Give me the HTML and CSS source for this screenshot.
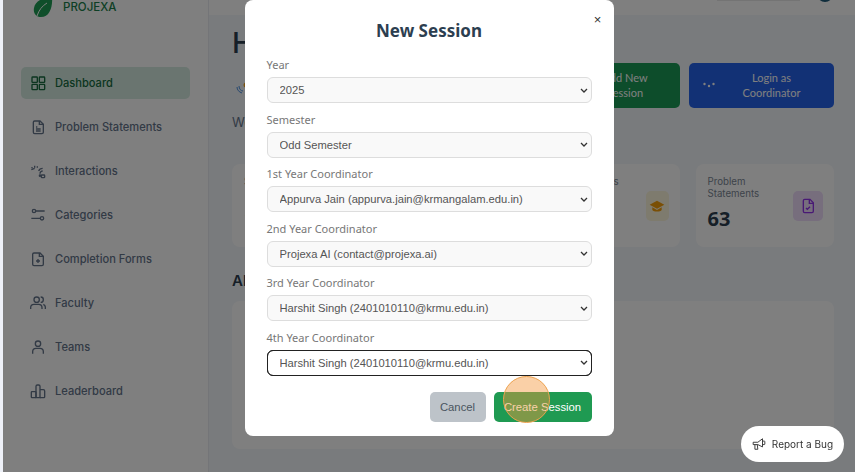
FILE: index.html
```html
<!DOCTYPE html>
<html lang="en">
<head>
  <meta charset="UTF-8">
  <meta name="viewport" content="width=device-width,initial-scale=1.0">
  <title>Projexa Dashboard</title>
  <link rel="stylesheet" href="styles.css">
</head>
<body>
  <div class="layout">
    <aside class="sidebar">
      <div class="brand">
        <svg class="brand-leaf" viewBox="0 0 20 24"><path d="M19 0C20 12 17 22 8 22C3 22 0 18 1 13C2 6 10 3 19 0Z" fill="#1f9d55"/><path d="M4 21C6 15 9 11 14 8" fill="none" stroke="#fff" stroke-width="1"/></svg>
        <span>PROJEXA</span>
      </div>
      <nav class="nav">
        <a class="nav-item active">
          <svg viewBox="0 0 24 24"><rect x="3" y="3" width="8" height="8" rx="1"/><rect x="14" y="3" width="8" height="8" rx="1"/><rect x="3" y="14" width="8" height="8" rx="1"/><rect x="14" y="14" width="8" height="8" rx="1"/></svg>
          Dashboard
        </a>
        <a class="nav-item">
          <svg viewBox="0 0 24 24"><path d="M5 5a2 2 0 0 1 2-2h8l5 5v12a2 2 0 0 1-2 2H7a2 2 0 0 1-2-2Z"/><path d="M14 3v5h6M9 12h2M9 15h7M9 18h7"/></svg>
          Problem Statements
        </a>
        <a class="nav-item">
          <svg viewBox="0 0 24 24"><path d="M2 10l5-2M3 6v2M7 4v3M11 5v2M13 12c1-3 3-4 6-4M15 16c0-2 2-4 4-4"/><rect x="17" y="18" width="5" height="4" rx="1"/><circle cx="15" cy="19" r="1"/></svg>
          Interactions
        </a>
        <a class="nav-item">
          <svg viewBox="0 0 24 24"><circle cx="6" cy="6" r="2.5"/><path d="M9 6h13M2 17h13"/><circle cx="18" cy="17" r="2.5"/></svg>
          Categories
        </a>
        <a class="nav-item">
          <svg viewBox="0 0 24 24"><path d="M4 5a2 2 0 0 1 2-2h9l5 5v12a2 2 0 0 1-2 2H6a2 2 0 0 1-2-2Z"/><path d="M14 3v5h6M12 12v6M9 15h6"/></svg>
          Completion Forms
        </a>
        <a class="nav-item">
          <svg viewBox="0 0 24 24"><circle cx="10" cy="7" r="4"/><path d="M1 21v-2a5 5 0 0 1 5-5h7a5 5 0 0 1 5 5v2M16 3a4 4 0 0 1 0 8M20 14a5 5 0 0 1 3 5v2"/></svg>
          Faculty
        </a>
        <a class="nav-item">
          <svg viewBox="0 0 24 24"><circle cx="12" cy="7" r="4"/><path d="M4 22v-3a5 5 0 0 1 5-5h6a5 5 0 0 1 5 5v3"/></svg>
          Teams
        </a>
        <a class="nav-item">
          <svg viewBox="0 0 24 24"><rect x="2" y="13" width="7" height="9" rx="1"/><path d="M9 22V5a2 2 0 0 1 2-2h2a2 2 0 0 1 2 2v17Z"/><path d="M15 10h5a2 2 0 0 1 2 2v9a1 1 0 0 1-1 1h-6"/></svg>
          Leaderboard
        </a>
      </nav>
    </aside>

    <main class="main">
      <div class="topbar">
        <div class="top-search"></div>
        <div class="avatar"></div>
      </div>
      <div class="content">
        <div class="page-head">
          <div class="page-title">
            <h1>Hi</h1>
            <div class="session-line">
              <svg viewBox="0 0 12 12"><path d="M1 5c0 3 2 5 5 6M3 4c0 3 2 5 4 5" fill="none" stroke="#4a90e2" stroke-width="1"/><circle cx="10" cy="3" r="2.5" fill="#f5a623"/></svg>
            </div>
            <p>We</p>
          </div>
          <div class="head-actions">
            <button class="head-btn green">Add New<br>Session</button>
            <button class="head-btn blue">
              <svg viewBox="0 0 12 6"><circle cx="1.5" cy="2" r="1.2"/><circle cx="6" cy="4" r="1.2"/><circle cx="10.5" cy="2" r="1.2"/></svg>
              <span>Login as<br>Coordinator</span>
            </button>
          </div>
        </div>

        <div class="stats">
          <div class="stat-card">
            <div class="stat-text"><div class="stat-label">Staff</div><div class="stat-value">12</div></div>
          </div>
          <div class="stat-card"></div>
          <div class="stat-card">
            <div class="stat-text"><div class="stat-label">Total Students</div></div>
            <div class="stat-icon yellow">
              <svg viewBox="0 0 24 24"><path d="M12 4 1 10l11 6 11-6Z" fill="#f59e0b"/><path d="M5 14v4c2 3 12 3 14 0v-4l-7 4Z" fill="#f59e0b"/></svg>
            </div>
          </div>
          <div class="stat-card">
            <div class="stat-text"><div class="stat-label">Problem Statements</div><div class="stat-value">63</div></div>
            <div class="stat-icon purple">
              <svg viewBox="0 0 24 24" fill="none" stroke="#9333ea" stroke-width="2"><path d="M5 4a2 2 0 0 1 2-2h8l5 5v13a2 2 0 0 1-2 2H7a2 2 0 0 1-2-2Z"/><path d="M14 2v6h6M9 15l2 2 4-4"/></svg>
            </div>
          </div>
        </div>

        <h2 class="section-title">All</h2>
        <div class="session-panel"></div>
      </div>
    </main>
  </div>

  <div class="overlay">
    <form class="modal">
      <button type="button" class="modal-close">&times;</button>
      <h2>New Session</h2>
      <div class="field">
        <label>Year</label>
        <select><option>2025</option></select>
      </div>
      <div class="field">
        <label>Semester</label>
        <select><option>Odd Semester</option></select>
      </div>
      <div class="field">
        <label>1st Year Coordinator</label>
        <select><option>Appurva Jain (appurva.jain@krmangalam.edu.in)</option></select>
      </div>
      <div class="field">
        <label>2nd Year Coordinator</label>
        <select><option>Projexa AI (contact@projexa.ai)</option></select>
      </div>
      <div class="field">
        <label>3rd Year Coordinator</label>
        <select><option>Harshit Singh (2401010110@krmu.edu.in)</option></select>
      </div>
      <div class="field">
        <label>4th Year Coordinator</label>
        <select class="focused"><option>Harshit Singh (2401010110@krmu.edu.in)</option></select>
      </div>
      <div class="modal-actions">
        <button type="button" class="btn-cancel">Cancel</button>
        <button type="button" class="btn-create">Create Session<span class="click-mark"></span></button>
      </div>
    </form>

    <button class="report-bug">
      <svg viewBox="0 0 24 24"><path d="M2 9h8l8-6v14l-8-4H2Z"/><path d="M5 13v8h5l-1-8M18 7h3a1 1 0 0 1 1 1v4a1 1 0 0 1-1 1h-3"/></svg>
      Report a Bug
    </button>
  </div>
</body>
</html>
```

FILE: styles.css
```css
:root {
  --green: #1a7f4b;
  --page: #f3f6fa;
  --text: #2c3e50;
  --muted: #64748b;
  --radius: 8px;
}
*, *::before, *::after { box-sizing: border-box; }
html, body { height: 100%; }
body {
  margin: 0;
  overflow: hidden;
  font-family: 'Inter', sans-serif;
  background: #eef1f8;
  color: var(--text);
}
.layout {
  display: flex;
  height: 472px;
  margin-left: 3px;
}

/* sidebar */
.sidebar {
  width: 206px;
  flex-shrink: 0;
  background: #fff;
  border-right: 1px solid #e8ebf0;
  padding: 0 18px;
}
.brand {
  display: flex;
  align-items: flex-start;
  gap: 10px;
  height: 67px;
  padding-left: 12px;
  color: var(--green);
  font-size: 11.5px;
  font-weight: 500;
}
.brand-leaf { width: 20px; height: 24px; margin-top: -5px; }
.brand span { padding-top: 1px; line-height: 13px; }
.nav { display: flex; flex-direction: column; gap: 12px; }
.nav-item {
  display: flex;
  align-items: center;
  gap: 9px;
  height: 32px;
  padding-left: 9px;
  border-radius: 5px;
  color: var(--muted);
  font-size: 11.1px;
  font-weight: 500;
}
.nav-item svg {
  width: 16px;
  height: 16px;
  fill: none;
  stroke: currentColor;
  stroke-width: 2;
}
.nav-item.active {
  background: #d5ebe0;
  color: #166a3f;
}

/* main area */
.main {
  flex: 1;
  min-width: 0;
  background: var(--page);
}
.topbar {
  display: flex;
  justify-content: flex-end;
  gap: 17px;
  height: 15px;
  padding-right: 22px;
  background: #fff;
}
.top-search {
  width: 83px;
  height: 1px;
  background: #e8e8e8;
}
.avatar {
  width: 16px;
  height: 16px;
  margin-top: -14px;
  border-radius: 50%;
  background: #1e5a78;
}
.content { padding: 9px 21px 0 23px; }
.page-head {
  display: flex;
  align-items: center;
  justify-content: space-between;
  height: 122px;
}
.page-title h1 {
  margin: 0;
  font-size: 29px;
  font-weight: 500;
  line-height: 38px;
}
.session-line {
  display: flex;
  align-items: center;
  height: 20px;
  margin: 16px 0 16px 4px;
}
.session-line svg { width: 12px; height: 12px; }
.page-title p {
  margin: 0 0 16px;
  color: var(--muted);
  font-size: 13px;
  line-height: 16px;
}
.head-actions { display: flex; gap: 9px; }
.head-btn {
  display: flex;
  align-items: center;
  justify-content: center;
  height: 45px;
  border: none;
  border-radius: 5px;
  color: #fff;
  font-family: 'Lato', sans-serif;
  font-size: 11px;
  line-height: 15px;
}
.head-btn.green { width: 110px; background: #1a9a57; }
.head-btn.blue {
  width: 145px;
  padding: 0 6px 0 14px;
  background: #2563eb;
}
.head-btn.blue svg { width: 12px; height: 6px; fill: #fff; }
.head-btn.blue span { flex: 1; }

.stats {
  display: grid;
  grid-template-columns: repeat(4, 1fr);
  gap: 16px;
  margin-top: 18px;
}
.stat-card {
  display: flex;
  align-items: center;
  justify-content: space-between;
  height: 83px;
  padding: 12px 11px 12px 12px;
  background: #fff;
  border-radius: var(--radius);
}
.stat-text { align-self: flex-start; }
.stat-label {
  width: 72px;
  min-height: 24px;
  color: #7b8794;
  font-size: 9.7px;
  line-height: 12px;
}
.stat-value {
  margin-top: 4px;
  font-family: 'Noto Sans', sans-serif;
  font-size: 20px;
  font-weight: 700;
  line-height: 30px;
}
.stat-icon {
  display: flex;
  align-items: center;
  justify-content: center;
  width: 30px;
  height: 30px;
  flex-shrink: 0;
  border-radius: 5px;
}
.stat-icon svg { width: 16px; height: 16px; }
.stat-icon.yellow { width: 23px; background: #fdf6dc; }
.stat-icon.purple { background: #eedcfb; }

.section-title {
  margin: 24px 0 0;
  font-size: 15px;
  font-weight: 600;
  line-height: 20px;
}
.session-panel {
  height: 148px;
  margin-top: 10px;
  background: #fff;
  border-radius: var(--radius);
}

/* modal */
.overlay {
  position: fixed;
  top: 0;
  right: 0;
  bottom: 0;
  left: 3px;
  display: flex;
  justify-content: center;
  background: rgba(0, 0, 0, 0.5);
}
.modal {
  position: relative;
  width: 369px;
  height: 436px;
  padding: 19px 22px 0;
  background: #fff;
  border-radius: 8px;
}
.modal h2 {
  margin: 0 0 14px;
  font-family: 'Noto Sans', sans-serif;
  font-size: 17px;
  font-weight: 700;
  line-height: 24px;
  text-align: center;
}
.modal-close {
  position: absolute;
  top: 11px;
  right: 10px;
  padding: 0;
  width: 12px;
  height: 18px;
  border: none;
  background: none;
  color: #333;
  font-size: 13px;
  line-height: 18px;
}
.field {
  height: 54.6px;
  color: #777;
  font-family: 'Noto Sans', sans-serif;
  font-size: 11px;
  line-height: 16px;
}
.field label { display: block; }
.field select {
  display: block;
  width: 100%;
  height: 26px;
  margin-top: 4px;
  padding: 0 20px 0 12px;
  border: 1px solid #ddd;
  border-radius: 6px;
  appearance: none;
  background-color: #f9f9f9;
  background-image: url("data:image/svg+xml,%3Csvg xmlns='http://www.w3.org/2000/svg' viewBox='0 0 8 5'%3E%3Cpath d='M1 1l3 3 3-3' fill='none' stroke='%23333' stroke-width='1.3'/%3E%3C/svg%3E");
  background-repeat: no-repeat;
  background-position: right 3px center;
  background-size: 8px 5px;
  color: #555;
  font-family: 'Liberation Sans', sans-serif;
  font-size: 11.2px;
}
.field select.focused {
  border-color: #222;
  outline: 1px solid #222;
  outline-offset: -1px;
  background-color: #fff;
}
.modal-actions {
  display: flex;
  justify-content: flex-end;
  gap: 8px;
  margin-top: 7px;
}
.modal-actions button {
  height: 30px;
  border: none;
  border-radius: 5px;
  font-family: 'Liberation Sans', sans-serif;
  font-size: 11.3px;
}
.btn-cancel { width: 56px; background: #bdc3c9; color: #4a5560; }
.btn-create {
  position: relative;
  width: 98px;
  background: #1f9a52;
  color: #fff;
}
.click-mark {
  position: absolute;
  top: -16px;
  left: 9px;
  width: 47px;
  height: 47px;
  border: 1px solid #eda24f;
  border-radius: 50%;
  background: rgba(245, 150, 60, 0.45);
}
.report-bug {
  position: absolute;
  right: 11px;
  bottom: 10px;
  display: flex;
  align-items: center;
  justify-content: center;
  gap: 6px;
  width: 103px;
  height: 36px;
  border: none;
  border-radius: 18px;
  background: #fff;
  color: #333;
  font-family: 'Inter', sans-serif;
  font-size: 10px;
}
.report-bug svg {
  width: 14px;
  height: 14px;
  fill: none;
  stroke: currentColor;
  stroke-width: 1.6;
}
```
